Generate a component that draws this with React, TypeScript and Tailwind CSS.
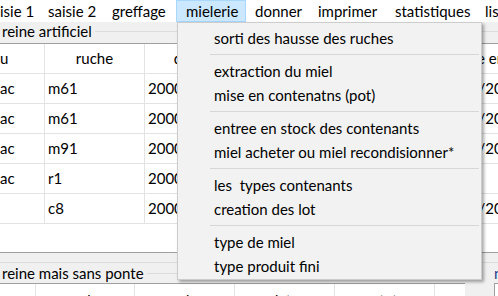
import React from 'react'

const menuBar = [
  { label: 'saisie 1', cls: 'w-[62px] -ml-[23px]' },
  { label: 'saisie 2', cls: 'w-[64px]' },
  { label: 'greffage', cls: 'w-[73px]' },
  { label: 'mielerie', cls: 'w-[70px] bg-[#cce8ff] border border-[#a8d8ff]' },
  { label: 'donner', cls: 'w-[63px]' },
  { label: 'imprimer', cls: 'w-[77px]' },
  { label: 'statistiques', cls: 'w-[90px]' },
  { label: 'liste', cls: 'w-[60px]' },
]

const groups = [
  ['sorti des hausse des ruches'],
  ['extraction du miel', 'mise en contenatns (pot)'],
  ['entree en stock des contenants', 'miel acheter ou miel recondisionner*'],
  ['les  types contenants', 'creation des lot'],
  ['type de miel', 'type produit fini'],
]

const rows = [
  { a: 'ac', ruche: 'm61', date: '12/05/2020' },
  { a: 'ac', ruche: 'm61', date: '12/05/2020' },
  { a: 'ac', ruche: 'm91', date: '14/05/2020' },
  { a: 'ac', ruche: 'r1', date: '' },
  { a: '', ruche: 'c8', date: '20/05/2020' },
]

const bottomCols = [
  { label: '', w: 'w-[36px]' },
  { label: 'ruche', w: 'w-[99px]' },
  { label: 'cadre', w: 'w-[100px]' },
  { label: 'date', w: 'w-[100px]' },
  { label: 'etat', w: 'w-[100px]' },
]

function GroupLabel({ text, h }: { text: string; h: string }) {
  return (
    <div className={`flex items-center ${h}`}>
      <span className="pl-[2px] pr-[3px] whitespace-pre">{text}</span>
      <div className="flex-1 h-px bg-[#dcdcdc]" />
    </div>
  )
}

export default function App() {
  return (
    <div className="w-[498px] h-[296px] overflow-hidden relative bg-[#f0f0f0] text-[15px] text-black font-[Lato,sans-serif]">
      {/* menu bar */}
      <div className="h-[22px] bg-white flex items-stretch overflow-hidden">
        {menuBar.map((m) => (
          <div key={m.label} className={`shrink-0 flex items-center pl-[9px] whitespace-nowrap leading-none ${m.cls}`}>
            {m.label}
          </div>
        ))}
      </div>

      {/* reine artificiel */}
      <GroupLabel text="reine artificiel" h="h-[19px]" />
      <div className="mt-[2px] h-[210px] bg-white border-y border-[#a0a0a0] overflow-hidden">
        <div className="flex h-[30px] border-b border-[#e3e3e3] whitespace-nowrap">
          <div className="w-[45px] shrink-0 flex items-center border-r border-[#e3e3e3]">u</div>
          <div className="w-[100px] shrink-0 flex items-center justify-center border-r border-[#e3e3e3]">ruche</div>
          <div className="w-[100px] shrink-0 flex items-center justify-center border-r border-[#e3e3e3]">date d</div>
          <div className="w-[191px] shrink-0 border-r border-[#e3e3e3]" />
          <div className="w-[100px] shrink-0 flex items-center pl-[20px]">date entree</div>
        </div>
        {rows.map((r, i) => (
          <div key={i} className="flex h-[30px] border-b border-[#e3e3e3] whitespace-nowrap">
            <div className="w-[45px] shrink-0 flex items-center border-r border-[#e3e3e3]">{r.a}</div>
            <div className="w-[100px] shrink-0 flex items-center pl-[3px] border-r border-[#e3e3e3]">{r.ruche}</div>
            <div className="w-[100px] shrink-0 flex items-center pl-[3px] border-r border-[#e3e3e3]">20000</div>
            <div className="w-[191px] shrink-0 border-r border-[#e3e3e3]" />
            <div className="w-[100px] shrink-0 flex items-center pl-[1px]">{r.date}</div>
          </div>
        ))}
      </div>
      <div className="h-[10px] border-b border-[#dcdcdc]" />

      {/* reine mais sans ponte */}
      <div className="flex">
        <div className="w-[478px] shrink-0">
          <GroupLabel text="reine mais sans ponte" h="h-[20px]" />
          <div className="w-[465px] h-[34px] bg-white border-t border-[#a0a0a0] flex whitespace-nowrap">
            {bottomCols.map((c, i) => (
              <div key={i} className={`shrink-0 flex items-center justify-center border-r border-[#e3e3e3] ${c.w}`}>
                {c.label}
              </div>
            ))}
            <div className="flex-1" />
          </div>
        </div>
        <div className="flex-1 pl-[16px]">
          <div className="h-[20px] flex items-center text-[#1a3c8c]">n</div>
          <div className="h-[20px] bg-white border border-[#a0a0a0]" />
        </div>
      </div>

      {/* dropdown menu */}
      <div className="absolute left-[177px] top-[22px] w-[305px] bg-[#f2f2f2] border border-[#cccccc] shadow-[2px_2px_3px_rgba(0,0,0,0.35)] pt-[3px] pb-px">
        {groups.map((g, gi) => (
          <div key={gi}>
            {gi > 0 && (
              <div className="h-[9px] flex items-center pl-[32px] pr-[2px]">
                <div className="flex-1 h-px bg-[#d7d7d7]" />
              </div>
            )}
            {g.map((item) => (
              <div key={item} className="h-[24px] flex items-center pl-[36px] whitespace-pre">
                {item}
              </div>
            ))}
          </div>
        ))}
      </div>
    </div>
  )
}
